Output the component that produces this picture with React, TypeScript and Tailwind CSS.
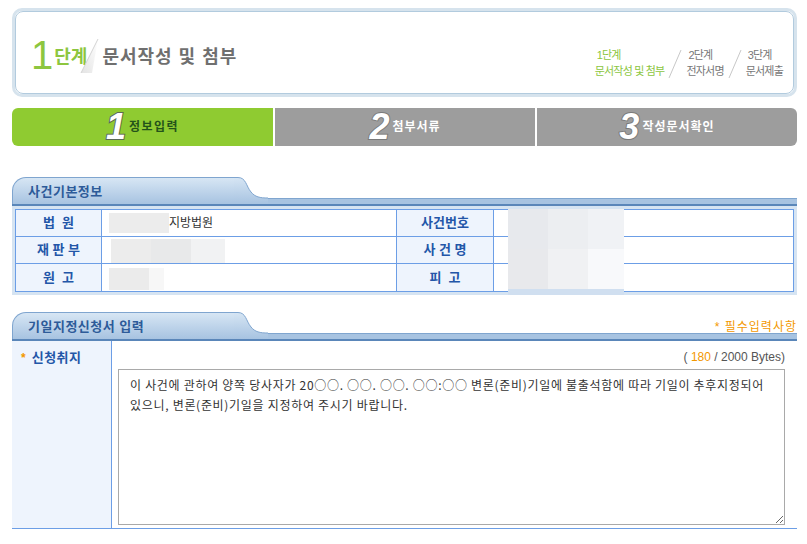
import React from 'react';

const font = "font-['Liberation_Sans','Noto_Sans_CJK_KR',sans-serif]";

function SectionTab({ id, title, right }: { id: string; title: string; right?: React.ReactNode }) {
  return (
    <div className="flex items-end h-[29px] border-b-2 border-[#5a86b9] relative">
      <div className="w-[222px] h-full rounded-tl-[14px] border-t border-l border-[#7fa5cf] bg-gradient-to-b from-[#d7e6f4] to-[#a7c3e1] flex items-center pl-[15px] pt-[2px]">
        <span className="text-[13px] font-bold text-[#2d5b99] tracking-[0.5px]">{title}</span>
      </div>
      <svg width="34" height="27" viewBox="0 0 34 27" className="block shrink-0">
        <defs>
          <linearGradient id={id} x1="0" y1="0" x2="0" y2="27" gradientUnits="userSpaceOnUse">
            <stop offset="0" stopColor="#d7e6f4" />
            <stop offset="1" stopColor="#a7c3e1" />
          </linearGradient>
        </defs>
        <path d="M0 0.5 H4 C12 0.5 12 9 17 15 C21 20 26 21 34 21 V27 H0 Z" fill={`url(#${id})`} />
        <path d="M0 0.5 H4 C12 0.5 12 9 17 15 C21 20 26 21 34 21" stroke="#7fa5cf" fill="none" />
      </svg>
      <div className="flex-1 h-[6px] bg-[#a7c3e1] border-t border-[#7fa5cf]" />
      {right && <div className="absolute right-0 top-[2px]">{right}</div>}
    </div>
  );
}

function Numeral({ n, dark }: { n: string; dark?: boolean }) {
  return (
    <span
      className={`font-['Liberation_Sans'] italic font-bold text-[36px] leading-none text-white [paint-order:stroke_fill] ${
        dark ? '[-webkit-text-stroke:2px_#5c6b55]' : '[-webkit-text-stroke:2px_#7a7a7a]'
      }`}
    >
      {n}
    </span>
  );
}

function Slash() {
  return (
    <svg width="18" height="30" viewBox="0 0 18 30" className="block mx-[2px]">
      <line x1="15" y1="1" x2="3" y2="29" stroke="#c8c8c8" strokeWidth="1" />
    </svg>
  );
}

export default function App() {
  const label = 'bg-[#eef4fd] text-[#2356a8] font-bold text-[13px] flex items-center justify-center border-[#6c9ee6]';
  const cell = 'border-[#6c9ee6] flex items-center text-[12px] text-[#333] px-[7px]';

  return (
    <div className={`${font} bg-white w-[807px] h-[544px] overflow-hidden pt-[8px] px-[12px] pr-[10px]`}>
      {/* step header box */}
      <div className="h-[89px] rounded-[10px] border-[3px] border-[#d6e3ed]">
        <div className="h-full rounded-[8px] border border-[#b2cbde] flex justify-between pl-[15px] pr-[10px]">
          <div className="flex items-center pt-[4px]">
            <span className="text-[#8dc63f] text-[40px] font-['Liberation_Sans'] leading-none">1</span>
            <span className="text-[#8dc63f] text-[18px] font-bold ml-[1px] mt-[6px]">단계</span>
            <svg width="22" height="38" viewBox="0 0 22 38" className="block -ml-[10px] mt-[4px]">
              <defs>
                <linearGradient id="fold" x1="0" y1="1" x2="1" y2="0">
                  <stop offset="0" stopColor="#e3e3e3" />
                  <stop offset="1" stopColor="#ffffff" />
                </linearGradient>
              </defs>
              <path d="M21 1 L4 35 L15 35 Z" fill="url(#fold)" />
              <line x1="21" y1="1" x2="4" y2="35" stroke="#d4d4d4" />
            </svg>
            <span className="text-[#6f6f6f] text-[18px] font-bold ml-[3px] mt-[6px] tracking-[1px]">문서작성 및 첨부</span>
          </div>
          <div className="flex items-end self-end mb-[14px] text-[11px] leading-[16px] tracking-[-0.8px]">
            <div className="flex flex-col items-start text-[#8cc63f]">
              <span className="pl-[2px]">1단계</span>
              <span>문서작성 및 첨부</span>
            </div>
            <Slash />
            <div className="flex flex-col items-start text-[#777]">
              <span className="pl-[2px]">2단계</span>
              <span>전자서명</span>
            </div>
            <Slash />
            <div className="flex flex-col items-start text-[#777]">
              <span className="pl-[2px]">3단계</span>
              <span>문서제출</span>
            </div>
          </div>
        </div>
      </div>

      {/* tabs */}
      <div className="mt-[11px] flex gap-[2px] h-[38px]">
        <div className="w-[261px] rounded-l-[6px] bg-[#8fcb31] flex items-center justify-center gap-[3px]">
          <Numeral n="1" dark />
          <span className="text-[12px] font-bold text-[#24531a] tracking-[1.5px]">정보입력</span>
        </div>
        <div className="w-[260px] bg-[#9d9d9d] flex items-center justify-center gap-[3px]">
          <Numeral n="2" />
          <span className="text-[12px] font-bold text-white tracking-[1px]">첨부서류</span>
        </div>
        <div className="flex-1 rounded-r-[6px] bg-[#9d9d9d] flex items-center justify-center gap-[3px]">
          <Numeral n="3" />
          <span className="text-[12px] font-bold text-white tracking-[1px]">작성문서확인</span>
        </div>
      </div>

      {/* 사건기본정보 */}
      <div className="mt-[31px]">
        <SectionTab id="tab1" title="사건기본정보" />
        <div className="bg-[#d6e4f2] px-[3px] pt-[3px] pb-[3px]">
          <div className="grid grid-cols-[86px_295px_97px_1fr] grid-rows-[27px_27px_27px] border border-[#6c9ee6] bg-white relative">
            <div className={`${label} border-r border-b`}>법&nbsp;&nbsp;원</div>
            <div className={`${cell} border-r border-b`}>
              <span className="w-[60px] h-[20px] bg-[#ececec]" />
              <span>지방법원</span>
            </div>
            <div className={`${label} border-r border-b`}>사건번호</div>
            <div className={`${cell} border-b`} />

            <div className={`${label} border-r border-b`}>재&nbsp;판&nbsp;부</div>
            <div className={`${cell} border-r border-b pl-[9px]`}>
              <span className="flex h-[24px] mt-[2px]">
                <span className="w-[40px] bg-[#ececec]" />
                <span className="w-[40px] bg-[#e8e9ea]" />
                <span className="w-[34px] bg-[#f1f2f3]" />
              </span>
            </div>
            <div className={`${label} border-r border-b`}>사&nbsp;건&nbsp;명</div>
            <div className={`${cell} border-b`} />

            <div className={`${label} border-r`}>원&nbsp;&nbsp;고</div>
            <div className={`${cell} border-r`}>
              <span className="flex h-[22px] mt-[3px]">
                <span className="w-[40px] bg-[#ebebeb]" />
                <span className="w-[15px] bg-[#f7f7f7]" />
              </span>
            </div>
            <div className={`${label} border-r`}>피&nbsp;&nbsp;고</div>
            <div className={cell} />

            <div className="absolute left-[492px] -top-[1px] w-[116px] h-[86px] grid grid-cols-[40px_40px_36px] grid-rows-[40px_40px_6px]">
              <span className="bg-[#e7e9ed]" />
              <span className="bg-[#eceef1]" />
              <span className="bg-[#f0f2f5]" />
              <span className="bg-[#e8e9ec]" />
              <span className="bg-[#f0f1f3]" />
              <span className="bg-[#f8f9fb]" />
              <span className="bg-[#d0dff0] col-span-3" />
            </div>
          </div>
        </div>
      </div>

      {/* 기일지정신청서 입력 */}
      <div className="mt-[17px]">
        <SectionTab
          id="tab2"
          title="기일지정신청서 입력"
          right={<span className="text-[12px] text-[#f39800] tracking-[1px]">* 필수입력사항</span>}
        />
        <div className="flex border-b border-[#6c9ee6] h-[188px]">
          <div className="w-[100px] bg-[#eef4fd] border-r border-[#6c9ee6] pl-[9px] pt-[7px] flex items-start">
            <span className="text-[#f39800] text-[12px] font-bold mr-[6px] mt-[1px]">*</span>
            <span className="text-[13px] font-bold text-[#2356a8] tracking-[0.5px]">신청취지</span>
          </div>
          <div className="flex-1 pl-[6px] pr-[12px] flex flex-col">
            <div className="text-right text-[12px] text-[#555] pt-[8px] h-[28px] leading-[16px]">
              ( <span className="text-[#f39800]">180</span> / 2000 Bytes)
            </div>
            <textarea
              className="w-full h-[156px] border border-[#a9a9a9] outline-none resize-y px-[11px] pt-[5px] text-[12px] leading-[20px] text-[#333] tracking-[0.7px] break-keep font-['Noto_Sans_CJK_KR',sans-serif]"
              defaultValue="이 사건에 관하여 양쪽 당사자가 20○○. ○○. ○○. ○○:○○ 변론(준비)기일에 불출석함에 따라 기일이 추후지정되어 있으니, 변론(준비)기일을 지정하여 주시기 바랍니다."
            />
          </div>
        </div>
      </div>
    </div>
  );
}
